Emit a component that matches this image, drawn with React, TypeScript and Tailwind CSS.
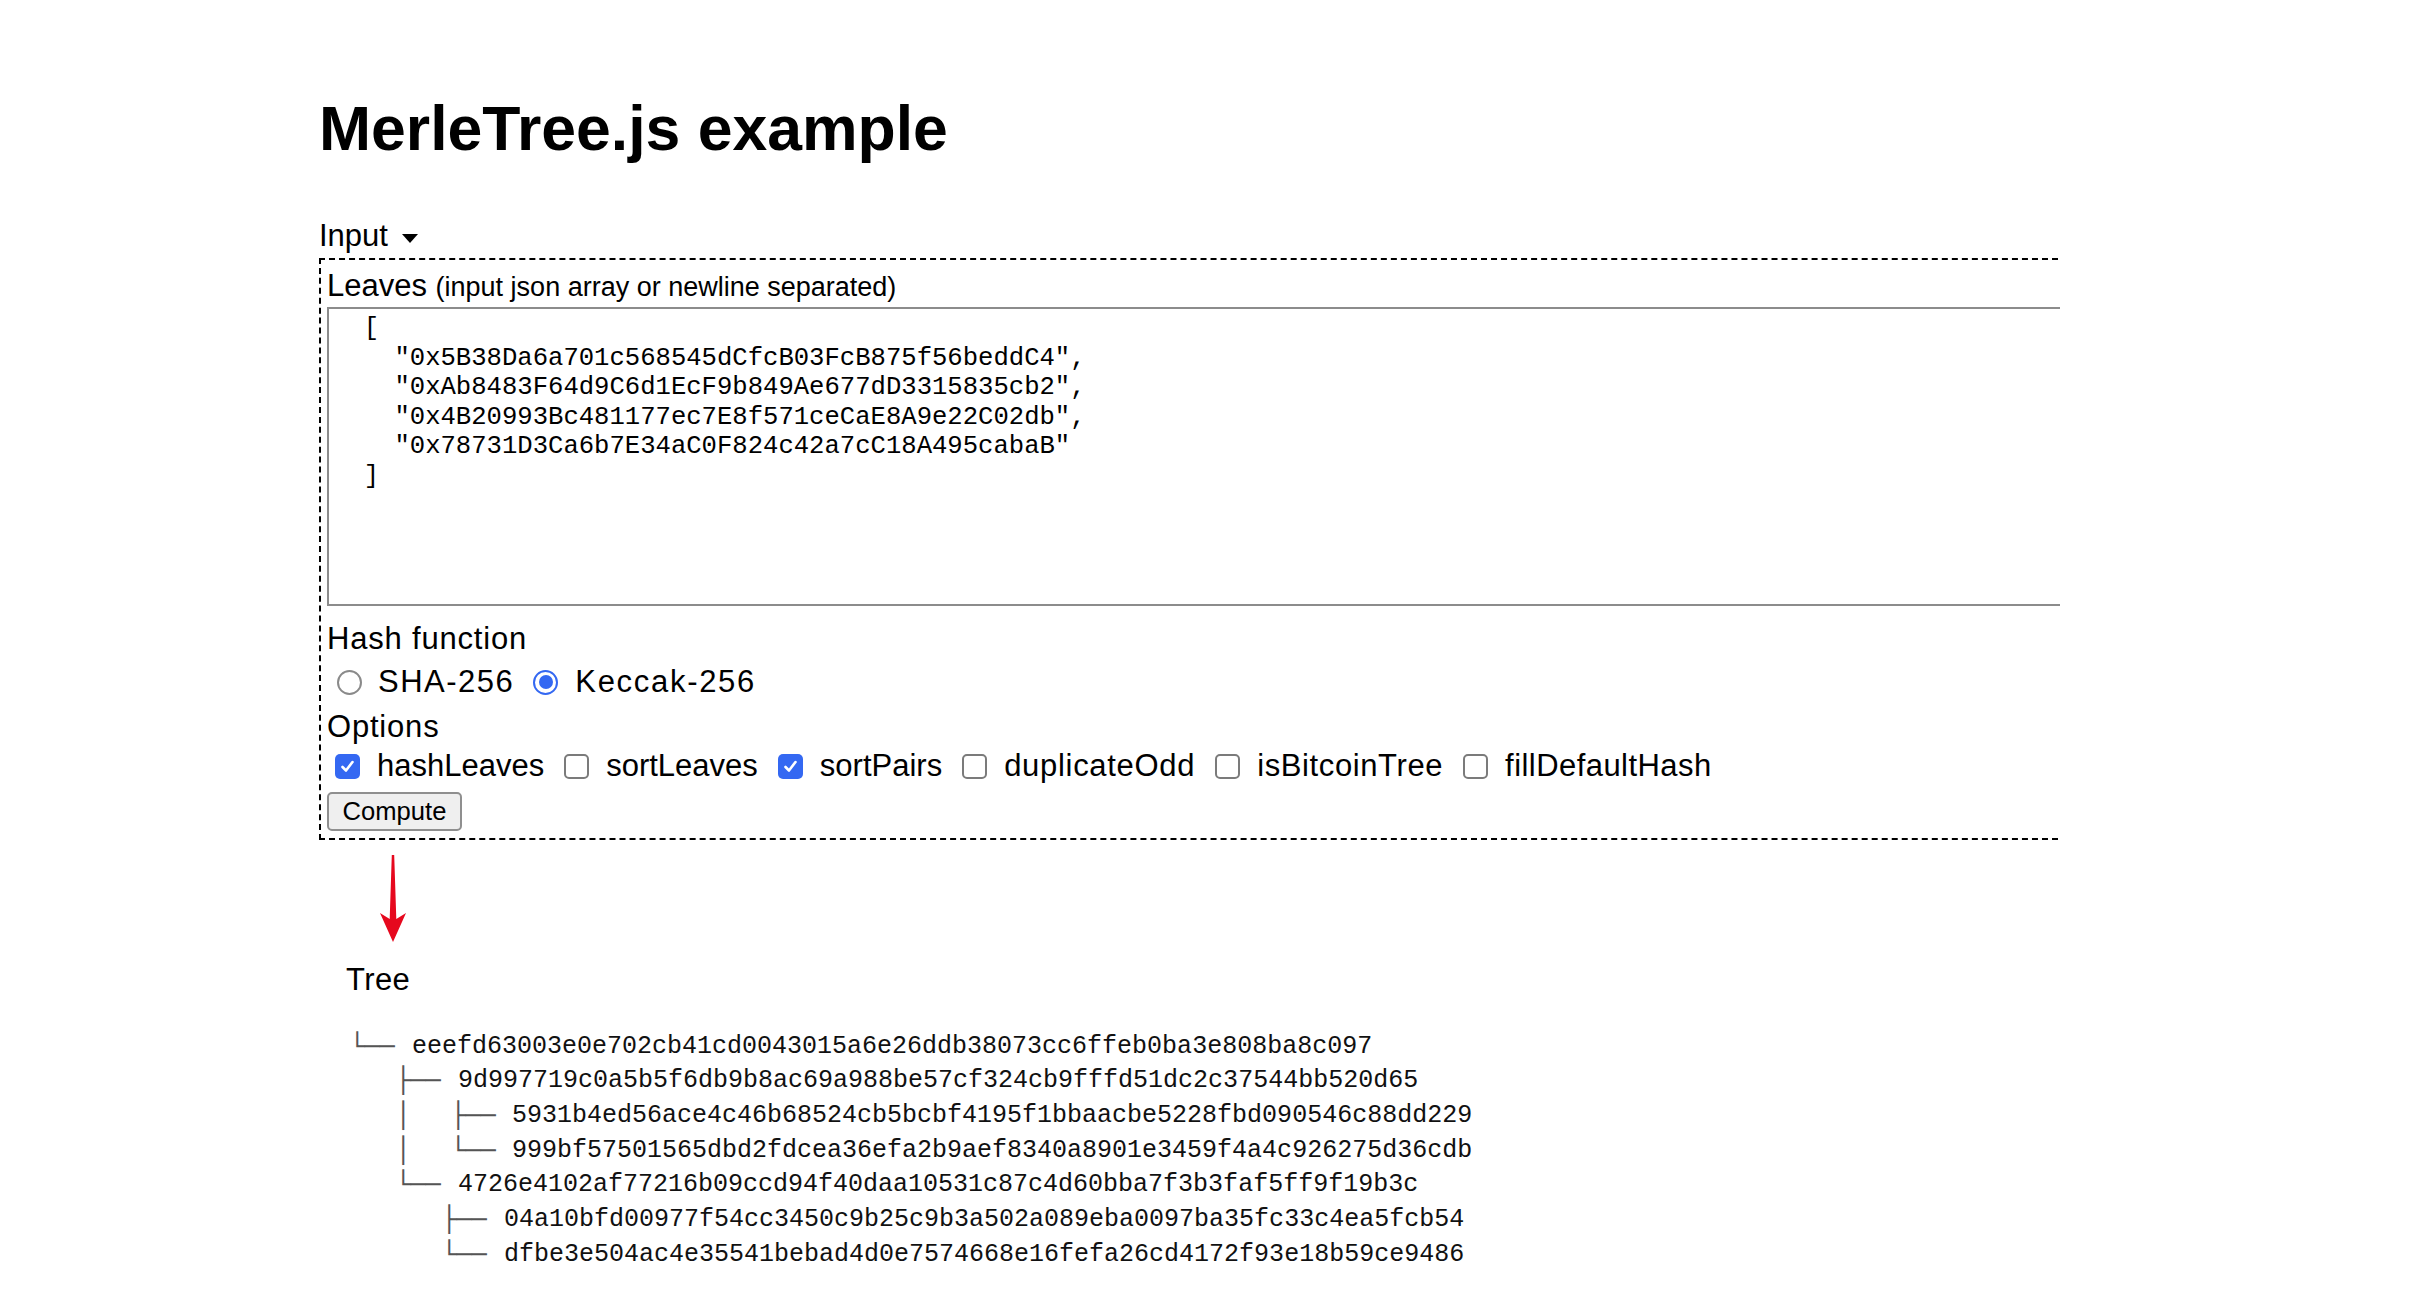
import React from "react";

function CheckBox({ checked }: { checked: boolean }) {
  if (checked) {
    return (
      <span className="inline-flex h-[25px] w-[25px] shrink-0 items-center justify-center rounded-[5px] bg-[#3468f2]">
        <svg width="17" height="17" viewBox="0 0 17 17">
          <path d="M3.5 9 L7 12.5 L13.5 4" fill="none" stroke="#fff" strokeWidth="2.6" strokeLinecap="round" strokeLinejoin="round" />
        </svg>
      </span>
    );
  }
  return <span className="inline-block h-[25px] w-[25px] shrink-0 rounded-[5px] border-2 border-[#7b7b7b] bg-white" />;
}

function Radio({ checked }: { checked: boolean }) {
  if (checked) {
    return (
      <span className="inline-flex h-[25px] w-[25px] shrink-0 items-center justify-center rounded-full border-[2.5px] border-[#3468f2] bg-white">
        <span className="h-[14px] w-[14px] rounded-full bg-[#3468f2]" />
      </span>
    );
  }
  return <span className="inline-block h-[25px] w-[25px] shrink-0 rounded-full border-2 border-[#8a8a8a] bg-white" />;
}

const leaves = `  [
    "0x5B38Da6a701c568545dCfcB03FcB875f56beddC4",
    "0xAb8483F64d9C6d1EcF9b849Ae677dD3315835cb2",
    "0x4B20993Bc481177ec7E8f571ceCaE8A9e22C02db",
    "0x78731D3Ca6b7E34aC0F824c42a7cC18A495cabaB"
  ]`;

const options: { name: string; checked: boolean; track: string }[] = [
  { name: "hashLeaves", checked: true, track: "" },
  { name: "sortLeaves", checked: false, track: "" },
  { name: "sortPairs", checked: true, track: "" },
  { name: "duplicateOdd", checked: false, track: "tracking-[0.7px]" },
  { name: "isBitcoinTree", checked: false, track: "tracking-[0.6px]" },
  { name: "fillDefaultHash", checked: false, track: "tracking-[0.45px]" },
];

function Conn({ c, w }: { c: string; w: string }) {
  return (
    <span className={`inline-block shrink-0 font-['DejaVu_Sans_Mono',monospace] text-[25px] text-[#555] ${w}`}>{c}</span>
  );
}

function Hash({ h }: { h: string }) {
  return <span className="font-['Liberation_Mono',monospace] text-[25px] text-[#111]">{h}</span>;
}

export default function App() {
  return (
    <div className="min-h-screen bg-white pl-[319px] pt-[92px] font-['Liberation_Sans',Arial,sans-serif] text-black">
      <h1 className="text-[62.5px] font-bold leading-[72px]">MerleTree.js example</h1>

      <div className="mt-[54px] flex h-[36px] items-start text-[31px] leading-[36px]">
        <span>Input</span>
        <svg className="ml-[14px] mt-[16px]" width="16" height="9" viewBox="0 0 16 9">
          <path d="M0 0 L16 0 L8 9 Z" fill="#000" />
        </svg>
      </div>

      <div className="mt-[4px] w-[1739px] border-2 border-r-0 border-dashed border-black pb-[7px] pl-[6px] pt-[8px]">
        <div className="h-[36px] whitespace-nowrap text-[31px] leading-[36px]">
          Leaves <span className="text-[27px]">(input json array or newline separated)</span>
        </div>
        <textarea
          readOnly
          defaultValue={leaves}
          spellCheck={false}
          className="mt-[3px] block h-[299px] w-[1733px] resize-none overflow-hidden border-2 border-r-0 border-[#8c8c8c] bg-white px-[4px] pt-[5px] pb-[4px] font-['Liberation_Mono',monospace] text-[25.6px] leading-[29.6px] text-black outline-none"
        />
        <div className="mt-[15px] h-[36px] text-[31px] leading-[36px] tracking-[0.8px]">Hash function</div>
        <div className="mt-[7px] flex h-[36px] items-center text-[31px] leading-[36px]">
          <span className="ml-[10px] flex">
            <Radio checked={false} />
          </span>
          <span className="ml-[16px] tracking-[1.5px]">SHA-256</span>
          <span className="ml-[19px] flex">
            <Radio checked={true} />
          </span>
          <span className="ml-[17px] tracking-[1.7px]">Keccak-256</span>
        </div>
        <div className="mt-[9px] h-[36px] text-[31px] leading-[36px] tracking-[0.8px]">Options</div>
        <div className="mt-[3px] flex h-[36px] items-center whitespace-nowrap text-[31px] leading-[36px]">
          {options.map((o, i) => (
            <span key={o.name} className={`flex items-center ${i === 0 ? "ml-[8px]" : "ml-[20px]"}`}>
              <CheckBox checked={o.checked} />
              <span className={`ml-[17px] ${o.track}`}>{o.name}</span>
            </span>
          ))}
        </div>
        <button className="mt-[8px] block h-[39px] w-[135px] rounded-[5px] border-2 border-[#8f8f8f] bg-[#efefef] text-center text-[25.6px] leading-[35px] text-black">
          Compute
        </button>
      </div>

      <svg className="ml-[58.7px] mt-[15px] block" width="30" height="87" viewBox="0 0 30 87">
        <path d="M13.8 0 L16.2 0 L18.3 64 L28 58 L15 87 L2 58 L11.7 64 Z" fill="#e6081e" />
      </svg>

      <div className="ml-[27px] mt-[20px] h-[36px] text-[31px] leading-[36px] tracking-[0.4px]">Tree</div>

      <div className="mt-[31.5px] whitespace-pre leading-[34.7px]">
        <div className="flex h-[34.7px] pl-[30.5px]">
          <Conn c="└──" w="w-[62.5px]" />
          <Hash h="eeefd63003e0e702cb41cd0043015a6e26ddb38073cc6ffeb0ba3e808ba8c097" />
        </div>
        <div className="flex h-[34.7px] pl-[76.5px]">
          <Conn c="├──" w="w-[62.5px]" />
          <Hash h="9d997719c0a5b5f6db9b8ac69a988be57cf324cb9fffd51dc2c37544bb520d65" />
        </div>
        <div className="flex h-[34.7px] pl-[76.5px]">
          <Conn c="│" w="w-[55px]" />
          <Conn c="├──" w="w-[61.5px]" />
          <Hash h="5931b4ed56ace4c46b68524cb5bcbf4195f1bbaacbe5228fbd090546c88dd229" />
        </div>
        <div className="flex h-[34.7px] pl-[76.5px]">
          <Conn c="│" w="w-[55px]" />
          <Conn c="└──" w="w-[61.5px]" />
          <Hash h="999bf57501565dbd2fdcea36efa2b9aef8340a8901e3459f4a4c926275d36cdb" />
        </div>
        <div className="flex h-[34.7px] pl-[76.5px]">
          <Conn c="└──" w="w-[62.5px]" />
          <Hash h="4726e4102af77216b09ccd94f40daa10531c87c4d60bba7f3b3faf5ff9f19b3c" />
        </div>
        <div className="flex h-[34.7px] pl-[122.5px]">
          <Conn c="├──" w="w-[62.5px]" />
          <Hash h="04a10bfd00977f54cc3450c9b25c9b3a502a089eba0097ba35fc33c4ea5fcb54" />
        </div>
        <div className="flex h-[34.7px] pl-[122.5px]">
          <Conn c="└──" w="w-[62.5px]" />
          <Hash h="dfbe3e504ac4e35541bebad4d0e7574668e16fefa26cd4172f93e18b59ce9486" />
        </div>
      </div>
    </div>
  );
}
